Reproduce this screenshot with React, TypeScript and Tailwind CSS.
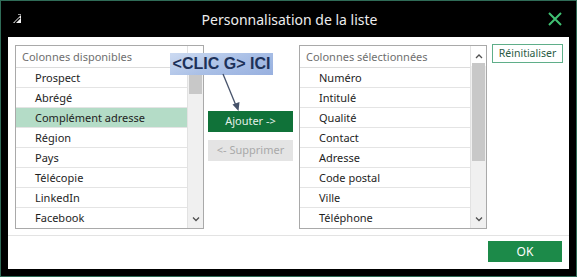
import React from "react";

const available = ["Prospect", "Abrégé", "Complément adresse", "Région", "Pays", "Télécopie", "LinkedIn", "Facebook"];
const selected = ["Numéro", "Intitulé", "Qualité", "Contact", "Adresse", "Code postal", "Ville", "Téléphone"];

function Chevron({ up, className }: { up?: boolean; className?: string }) {
  return (
    <svg className={className} width="8" height="6" viewBox="0 0 8 6" fill="none" stroke="currentColor" strokeWidth={1.3}>
      {up ? <path d="M1 5l3-3 3 3" /> : <path d="M1 1.5l3 3 3-3" />}
    </svg>
  );
}

interface ListBoxProps {
  title: string;
  items: string[];
  highlight?: string;
  width: string;
  thumb: string;
  upDisabled?: boolean;
}

function ListBox({ title, items, highlight, width, thumb, upDisabled }: ListBoxProps) {
  return (
    <div className={`${width} h-[184px] border border-[#a9a9a9] flex bg-white`}>
      <div className="flex-1 flex flex-col min-w-0">
        <div className="h-[22px] flex items-center pl-[6px] pt-[1px] text-[#6f6f6f] border-b border-[#dcdcdc]">{title}</div>
        {items.map((it) => (
          <div
            key={it}
            className={`h-[20px] flex items-center pl-[19px] pt-[1px] text-[#1e1e1e] border-b border-[#e4e4e4] last:border-b-0 ${
              it === highlight ? "bg-[#b4dcc7]" : ""
            }`}
          >
            {it}
          </div>
        ))}
      </div>
      <div className="w-[16px] flex flex-col bg-[#f0f0f0] border-l border-[#e2e2e2]">
        <div className="h-[20px] flex items-center justify-center bg-white">
          <Chevron up className={upDisabled ? "text-[#c4c4c4]" : "text-[#505050]"} />
        </div>
        <div className="flex-1 flex flex-col px-[1px]">
          <div className={`${thumb} bg-[#c8c8c8]`} />
        </div>
        <div className="h-[18px] flex items-center justify-center">
          <Chevron className="text-[#505050]" />
        </div>
      </div>
    </div>
  );
}

export default function App() {
  return (
    <div
      className="w-[577px] h-[277px] bg-black border border-[#2f6b57] flex flex-col relative text-[11px]"
      style={{ fontFamily: '"Noto Sans", "Open Sans", sans-serif' }}
    >
      {/* title bar */}
      <div className="h-[36px] flex items-center px-[11px] shrink-0">
        <svg width="10" height="10" viewBox="0 0 10 10">
          <path d="M1 9L9 1v8z" fill="#f2f2f2" />
          <path d="M3 9l5-5" stroke="#000" strokeWidth={1.4} />
          <path d="M6 0.5l3 0" stroke="#9a9a9a" strokeWidth={1} />
        </svg>
        <div className="flex-1 text-center text-[#ededed] text-[14px] pl-[10px]">Personnalisation de la liste</div>
        <svg width="16" height="16" viewBox="0 0 16 16" stroke="#40c073" strokeWidth={2} className="mr-[2px]">
          <path d="M2 2l12 12M14 2L2 14" />
        </svg>
      </div>

      {/* body */}
      <div className="mx-[7px] h-[232px] bg-white flex flex-col shrink-0">
        <div className="flex items-start pt-[8px] pl-[7px]">
          <ListBox
            title="Colonnes disponibles"
            items={available}
            highlight="Complément adresse"
            width="w-[189px]"
            thumb="mt-[1px] h-[27px]"
            upDisabled
          />
          <div className="w-[95px] flex flex-col pl-[4px] pt-[66px] gap-[8px]">
            <button className="w-[85px] h-[21px] bg-[#107239] text-[#e3efe8]">Ajouter -&gt;</button>
            <button className="w-[85px] h-[21px] bg-[#e4e4e4] text-[#a9a9a9]">&lt;- Supprimer</button>
          </div>
          <ListBox
            title="Colonnes sélectionnées"
            items={selected}
            width="w-[188px]"
            thumb="-mt-[3px] h-[98px]"
          />
          <button className="ml-[5px] -mt-[1px] w-[71px] h-[19px] border border-[#5fae89] text-[#2b5b45] text-[10.5px] flex items-center justify-center">
            Réinitialiser
          </button>
        </div>
        <div className="mt-[6px] border-t border-[#e3e3e3]" />
        <div className="flex justify-end pt-[5px] pr-[7px]">
          <button className="w-[74px] h-[21px] bg-[#1c8a49] text-white text-[12px]">OK</button>
        </div>
      </div>

      {/* annotation callout */}
      <div
        className="absolute left-[169px] top-[52px] w-[103px] h-[22px] flex items-center justify-center text-[#1d3159] font-bold text-[16px]"
        style={{
          background: "linear-gradient(160deg, #ccdaf1 0%, #a9bfe6 55%, #98b0df 100%)",
          fontFamily: '"Liberation Sans", Arial, sans-serif',
        }}
      >
        &lt;CLIC G&gt; ICI
      </div>
      <svg className="absolute left-[216px] top-[72px]" width="26" height="40" viewBox="0 0 26 40">
        <path d="M6 1L20 35" stroke="#46526a" strokeWidth={1.3} />
        <path d="M21.5 38L15.5 31.5L22.5 29z" fill="#46526a" />
      </svg>
    </div>
  );
}
